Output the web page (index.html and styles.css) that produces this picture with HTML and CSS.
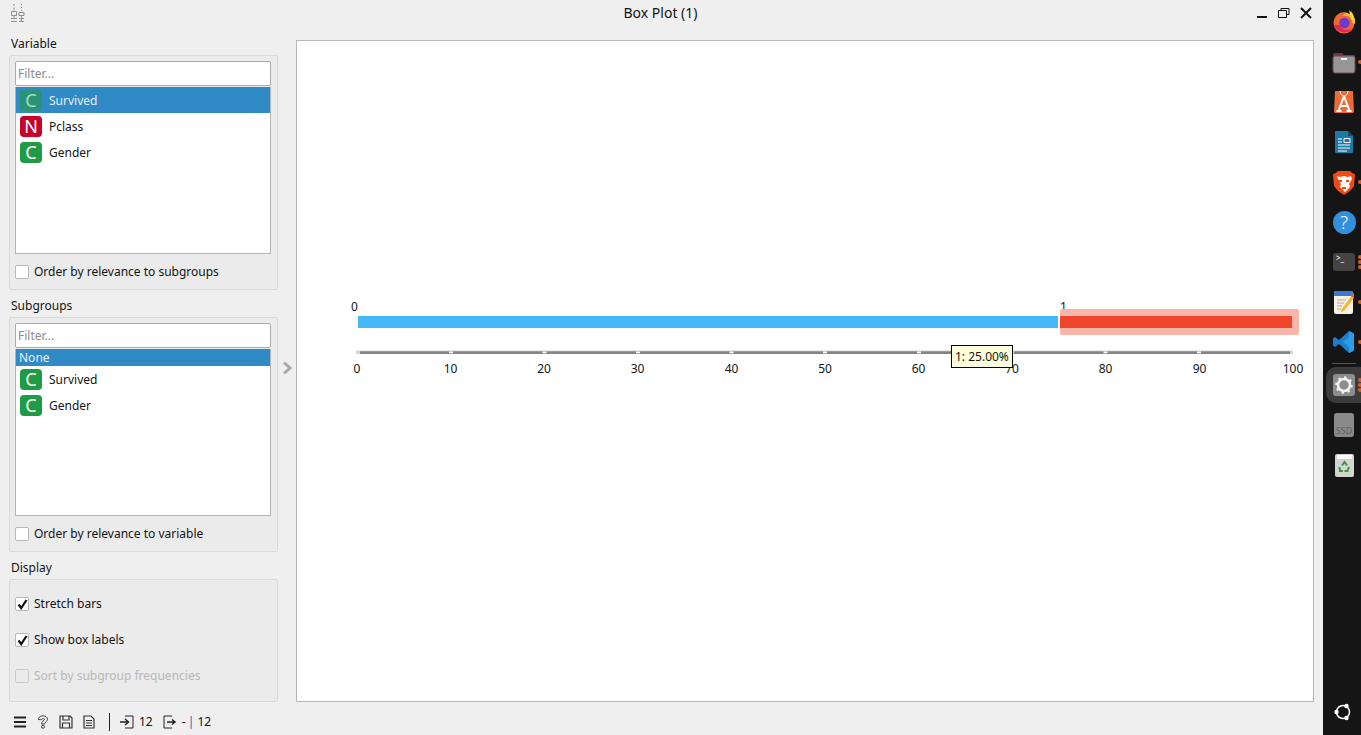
FILE: index.html
```html
<!DOCTYPE html>
<html lang="en">
<head>
<meta charset="utf-8">
<title>Box Plot (1)</title>
<link rel="stylesheet" href="styles.css">
</head>
<body>
<div class="window">
  <header class="titlebar">
    <svg class="app-icon" width="16" height="20" viewBox="0 0 16 20"><g fill="none" stroke="#8f8f8f"><path d="M4 1v2M4 4.500v3M1.500 8.500h5v4h-5zM4 13v2M1 15.500h6M1 18.500h6"/><path d="M11.500 1v1M11.500 4v1M11.500 7v1M9 9.500h5v3H9zM9 15.500h5M9 18.500h5M11.500 13v5"/></g></svg>
    <div class="title">Box Plot (1)</div>
    <div class="win-buttons">
      <svg width="12" height="12" viewBox="0 0 12 12"><path d="M1 10h10" stroke="#111" stroke-width="2"/></svg>
      <svg width="12" height="12" viewBox="0 0 12 12"><path d="M.5 3.500h8v7h-8zM3 3.500V1.500h8v6H8.500" fill="none" stroke="#111"/></svg>
      <svg width="12" height="12" viewBox="0 0 12 12"><path d="M1 1l10 10M11 1L1 11" fill="none" stroke="#111" stroke-width="2"/></svg>
    </div>
  </header>
  <div class="content">
    <aside class="sidebar">
      <section class="group">
        <h2 class="group-title">Variable</h2>
        <div class="group-box">
          <div class="filter">Filter...</div>
          <ul class="list">
            <li class="row selected"><span class="badge cont dim">C</span>Survived</li>
            <li class="row"><span class="badge nom">N</span>Pclass</li>
            <li class="row"><span class="badge cont">C</span>Gender</li>
          </ul>
          <label class="check order"><span class="box"></span>Order by relevance to subgroups</label>
        </div>
      </section>
      <section class="group">
        <h2 class="group-title">Subgroups</h2>
        <div class="group-box">
          <div class="filter">Filter...</div>
          <ul class="list">
            <li class="none">None</li>
            <li class="row"><span class="badge cont">C</span>Survived</li>
            <li class="row"><span class="badge cont">C</span>Gender</li>
          </ul>
          <label class="check order"><span class="box"></span>Order by relevance to variable</label>
        </div>
      </section>
      <section class="group">
        <h2 class="group-title">Display</h2>
        <div class="group-box display">
          <label class="check"><span class="box"><svg width="11" height="11" viewBox="0 0 11 11"><path d="M1.500 5.500l2.700 3.500L9.500 1" fill="none" stroke="#111" stroke-width="2.200"/></svg></span>Stretch bars</label>
          <label class="check"><span class="box"><svg width="11" height="11" viewBox="0 0 11 11"><path d="M1.500 5.500l2.700 3.500L9.500 1" fill="none" stroke="#111" stroke-width="2.200"/></svg></span>Show box labels</label>
          <label class="check disabled"><span class="box"></span>Sort by subgroup frequencies</label>
        </div>
      </section>
    </aside>
    <div class="splitter">
      <svg width="11" height="14" viewBox="0 0 11 14"><path d="M2 1.500L8 7l-6 5.500" fill="none" stroke="#a9a9a9" stroke-width="3"/></svg>
    </div>
    <main class="plot">
      <svg class="chart" width="1016" height="659" viewBox="0 0 1016 659">
        <g class="chart-text">
          <text x="57.500" y="270" text-anchor="middle">0</text>
          <text x="766.500" y="270" text-anchor="middle">1</text>
        </g>
        <rect x="61" y="275" width="700" height="12" fill="#45b8f8"/>
        <rect x="763" y="268" width="239" height="26" rx="2" fill="#fab5ab"/>
        <rect x="763" y="275" width="232" height="12" fill="#ef462c"/>
        <rect x="59" y="309.500" width="937" height="3.500" fill="#d4d4d4"/>
        <rect x="63" y="310.300" width="930" height="2.700" fill="#858585"/>
        <g fill="#fff">
          <rect x="152" y="310.500" width="4" height="1.800"/><rect x="245.500" y="310.500" width="4" height="1.800"/><rect x="339" y="310.500" width="4" height="1.800"/><rect x="432.500" y="310.500" width="4" height="1.800"/><rect x="526" y="310.500" width="4" height="1.800"/><rect x="620" y="310.500" width="4" height="1.800"/><rect x="713" y="310.500" width="4" height="1.800"/><rect x="806.500" y="310.500" width="4" height="1.800"/><rect x="900" y="310.500" width="4" height="1.800"/>
        </g>
        <g class="chart-text" text-anchor="middle">
          <text x="60" y="332">0</text><text x="153.500" y="332">10</text><text x="247" y="332">20</text><text x="340.500" y="332">30</text><text x="434.500" y="332">40</text><text x="528" y="332">50</text><text x="621.500" y="332">60</text><text x="715" y="332">70</text><text x="808.500" y="332">80</text><text x="902.500" y="332">90</text><text x="996" y="332">100</text>
        </g>
      </svg>
      <div class="tooltip">1: 25.00%</div>
    </main>
  </div>
  <footer class="statusbar">
    <svg width="14" height="14" viewBox="0 0 14 14"><path d="M1 2.500h12M1 7h12M1 11.500h12" stroke="#222" stroke-width="2"/></svg>
    <svg width="12" height="14" viewBox="0 0 12 14"><path d="M1.500 4.500C1.500 2.200 3.500.8 6 .8s4.500 1.400 4.500 3.500c0 2.200-2.700 2.700-3 4.700h-3c0-2.800 3-3.400 3-4.700 0-1-3-1-3 .5z" fill="none" stroke="#444"/><circle cx="6" cy="11.800" r="1.500" fill="none" stroke="#444"/></svg>
    <svg width="14" height="14" viewBox="0 0 14 14"><path d="M1 1h10l2 2v10H1zM4 1v4h6V1M3.500 13V8h7v5" fill="none" stroke="#333" stroke-width="1.200"/></svg>
    <svg width="12" height="14" viewBox="0 0 12 14"><path d="M1 1h7l3 3v9H1zM3 5.500h6M3 8h6M3 10.500h6" fill="none" stroke="#333" stroke-width="1.200"/></svg>
    <span class="divider"></span>
    <svg width="14" height="14" viewBox="0 0 14 14"><path d="M0 7h7M5 4l3.500 3L5 10" fill="none" stroke="#222" stroke-width="1.500"/><path d="M5 1h8v12H5" fill="none" stroke="#222"/></svg>
    <span class="count">12</span>
    <svg width="14" height="14" viewBox="0 0 14 14"><path d="M9 1H1v12h8" fill="none" stroke="#222"/><path d="M4 7h7M9 4.500L12 7l-3 2.500" fill="none" stroke="#222" stroke-width="1.500"/></svg>
    <span class="count">- <span class="bar">|</span> 12</span>
  </footer>
</div>
<nav class="dock">
  <div class="dock-item"><svg width="24" height="24" viewBox="0 0 24 24"><circle cx="12" cy="13" r="10.500" fill="#f4622d"/><path d="M2 11C4 4 10 2 14 3c-2 1-3 2-3 3 4-1 9 1 9 7l3 1c0-5-1-9-4-13 0 2-1 3-2 3-5-4-13-1-15 7z" fill="#fdb53c"/><path d="M17 0c3 3 6 7 6 13l-4-4z" fill="#ffd23f"/><circle cx="12.500" cy="13" r="5.200" fill="#6d3ad0"/><path d="M2 15c2 7 12 10 18 4-5 2-11 1-12-4z" fill="#e3245f"/></svg></div>
  <div class="dock-item dot"><svg width="24" height="24" viewBox="0 0 24 24"><path d="M1 5q0-2 2-2h7l2 2h10q1 0 1 2v3H1z" fill="#7a3044"/><rect x="1" y="6" width="22" height="17" rx="2" fill="#969696" stroke="#6e4a52"/><rect x="9" y="8" width="6" height="2" fill="#eee"/></svg></div>
  <div class="dock-item"><svg width="20" height="24" viewBox="0 0 20 24"><path d="M1 1h18l1 21-1 1H1l-1-1z" fill="#ec6a35"/><path d="M6 1c0 3 2 5 4 5s4-2 4-5" fill="none" stroke="#fff"/><path d="M10 6l-5.500 15M10 6l5.500 15M5.500 16h9M2.500 21h5M12.500 21h5" fill="none" stroke="#fff" stroke-width="2"/></svg></div>
  <div class="dock-item"><svg width="20" height="24" viewBox="0 0 20 24"><path d="M1 1h13l5 5v16q0 1-1 1H2q-1 0-1-1z" fill="#1d7aa6"/><path d="M14 1l5 5h-5z" fill="#0e4f70"/><path d="M4 9h4M4 12h4M10 8.500h6v4h-6zM4 15h12M4 18h12M4 21h9" stroke="#fff" fill="none"/></svg></div>
  <div class="dock-item dot"><svg width="22" height="25" viewBox="0 0 22 25"><path d="M5 1h12l2 2 3 1-1 12-4 5-6 4-6-4-4-5L0 4l3-1z" fill="#f14a15"/><path d="M4 6l3 1 4-1 4 1 3-1 1 3-3 5 1 3-5 5-5-5 1-3-3-5z" fill="#fff"/><path d="M6 11h3M13 11h3M9 18h4" stroke="#f14a15" stroke-width="2"/></svg></div>
  <div class="dock-item"><span class="help">?</span></div>
  <div class="dock-item dot triple"><span class="term">&gt;_</span></div>
  <div class="dock-item dot"><svg width="20" height="24" viewBox="0 0 20 24"><rect x="0" y="1" width="19" height="23" rx="2" fill="#f6f1e3"/><path d="M0 3q0-2 2-2h15q2 0 2 2v3H0z" fill="#3f78cf"/><path d="M3 10h9M3 13h7M3 16h5M3 19h4" stroke="#b9a98c"/><path d="M18 5L8 19l-1 3 3-1L20 8z" fill="#f6b52c"/><circle cx="19" cy="5" r="2" fill="#e8554e"/></svg></div>
  <div class="dock-item dot"><svg width="22" height="22" viewBox="0 0 22 22"><path d="M16 0l5 2.500v17L16 22 6 13l-4 3-2-1.500V7.500L2 6l4 3z" fill="#1a7fd0"/><path d="M16 0l5 2.500v17L16 22zM16 6l-6 5 6 5z" fill="#2a9ce8" fill-rule="evenodd"/></svg></div>
  <div class="dock-sep"></div>
  <div class="dock-active dot triple"><span class="gear-tile"><svg width="18" height="18" viewBox="0 0 18 18"><circle cx="9" cy="9" r="6" fill="none" stroke="#f2f2f2" stroke-width="2.500"/><circle cx="9" cy="9" r="7.800" fill="none" stroke="#f2f2f2" stroke-width="2" stroke-dasharray="2.400 3.700"/></svg></span></div>
  <div class="dock-item"><span class="ssd">SSD</span></div>
  <div class="dock-item"><svg width="19" height="23" viewBox="0 0 19 23"><rect width="19" height="23" rx="2" fill="#d3d6d0"/><rect x="2" y="1" width="15" height="4" rx="1" fill="#fdfdfd"/><path d="M7 11.500l2.500-3.500 2.500 3.500M14 13l-1.500 4h-3M8 17H5l-.5-4" fill="none" stroke="#3a9a3a" stroke-width="2"/></svg></div>
  <div class="dock-bottom"><svg width="18" height="18" viewBox="0 0 18 18"><circle cx="9" cy="9" r="6.500" fill="none" stroke="#fff" stroke-width="1.500"/><circle cx="2.500" cy="9" r="2.200" fill="#fff"/><circle cx="12.500" cy="3" r="2.200" fill="#fff"/><circle cx="12.500" cy="15" r="2.200" fill="#fff"/></svg></div>
</nav>
</body>
</html>
```

FILE: styles.css
```css
* { box-sizing: border-box; }
html, body { margin: 0; height: 100%; }
body {
  display: flex;
  width: 1361px;
  height: 735px;
  overflow: hidden;
  font: 12px/16px "Noto Sans", "Open Sans", sans-serif;
  color: #141414;
  background: #efefef;
}
.window { width: 1323px; display: flex; flex-direction: column; flex: none; }

.titlebar { height: 27px; position: relative; display: flex; align-items: center; justify-content: center; }
.app-icon { position: absolute; left: 10px; top: 3px; }
.title { font-size: 14px; margin: -2px 2px 0 0; }
.win-buttons { position: absolute; right: 11px; top: 7px; display: flex; gap: 10px; }

.content { height: 681px; display: flex; }
.sidebar { width: 269px; margin-left: 9px; padding-top: 8px; flex: none; }
.group-title { margin: 0; height: 20px; font-size: 12px; font-weight: 400; line-height: 16px; padding: 1px 0 0 2px; }
.group + .group { margin-top: 7px; }
.group-box {
  width: 269px;
  height: 235px;
  border: 1px solid #d9d9d9;
  border-radius: 2px;
  background: #ebebeb;
  padding: 5px;
}
.filter {
  height: 25px;
  border: 1px solid #ababab;
  border-radius: 2px;
  background: #fff;
  padding-left: 2px;
  line-height: 24px;
  color: #8c8c8c;
  width: 256px;
}
.list {
  list-style: none;
  margin: 0;
  padding: 0;
  width: 256px;
  height: 167px;
  background: #fff;
  border: 1px solid #b4b4b4;
  border-top: 0;
}
.row { height: 26px; display: flex; align-items: center; padding: 2px 0 0 4px; gap: 7px; }
.selected { background: #2f8ac6; color: #e6f0f7; margin-top: 1px; }
.none { height: 17px; padding-left: 3px; margin-top: 1px; background: #2f8ac6; color: #e6f0f7; line-height: 18px; }
.badge {
  width: 22px;
  height: 21px;
  margin-top: -2px;
  border-radius: 4px;
  color: #fff;
  font-size: 18px;
  line-height: 21px;
  text-align: center;
  flex: none;
}
.cont { background: #1f9a45; }
.nom { background: #c90028; }
.dim { background: #2b9276; color: #a8d8cd; }

.check { display: flex; align-items: center; gap: 5px; height: 16px; }
.order { margin-top: 10px; }
.box {
  width: 14px;
  height: 14px;
  border: 1px solid #b8b8b8;
  border-radius: 2px;
  background: #fff;
  display: flex;
  align-items: center;
  justify-content: center;
  flex: none;
}
.display { height: 123px; padding-top: 16px; display: flex; flex-direction: column; gap: 20px; }
.disabled { color: #b8b8b8; }
.disabled .box { background: #ebebeb; border-color: #c9c9c9; }

.splitter { width: 18px; flex: none; display: flex; align-items: center; justify-content: center; }
.plot {
  width: 1018px;
  height: 662px;
  margin-top: 13px;
  background: #fff;
  border: 1px solid #b7b7b7;
  position: relative;
  flex: none;
}
.chart { display: block; }
.chart-text text { font-size: 12px; fill: #141414; }
.tooltip {
  position: absolute;
  left: 654px;
  top: 304px;
  width: 62px;
  height: 23px;
  border: 1px solid #000;
  background: #ffffdc;
  padding-left: 3px;
  line-height: 21px;
  white-space: nowrap;
}

.statusbar { flex: 1; display: flex; align-items: center; padding-left: 13px; gap: 10px; padding-top: 1px; }
.divider { width: 1px; height: 18px; background: #222; margin-left: 4px; }
.count { margin-left: -5px; }
.bar { color: #1f66b5; margin-left: -1px; }

.dock { width: 38px; flex: none; background: #151515; padding-top: 2px; display: flex; flex-direction: column; overflow: hidden; }
.dock-item { height: 40px; display: flex; align-items: center; justify-content: center; position: relative; flex: none; padding-left: 4px; }
.dot::after {
  content: "";
  position: absolute;
  right: -1px;
  top: 18px;
  width: 4px;
  height: 4px;
  border-radius: 50%;
  background: #dc5a24;
}
.triple::after { box-shadow: 0 -5px #dc5a24, 0 5px #dc5a24; }
.help {
  width: 23px;
  height: 23px;
  border-radius: 50%;
  background: #3191de;
  color: #fff;
  text-align: center;
  font-size: 19px;
  font-weight: 300;
  line-height: 23px;
}
.term {
  width: 22px;
  height: 18px;
  border-radius: 3px;
  background: #444;
  color: #fff;
  font-size: 8px;
  line-height: 10px;
  padding-left: 3px;
}
.dock-sep { height: 1px; width: 24px; background: #555; margin: 1px 0 0 9px; flex: none; }
.dock-active {
  height: 36px;
  width: 35px;
  margin: 3px 0 2px 3px;
  border-radius: 10px 0 0 10px;
  background: #3c3c3c;
  display: flex;
  align-items: center;
  justify-content: center;
  position: relative;
  flex: none;
}
.dock-active.dot::after { top: 16px; }
.gear-tile {
  width: 22px;
  height: 22px;
  border-radius: 3px;
  background: #8d8d8d;
  display: flex;
  align-items: center;
  justify-content: center;
}
.ssd {
  width: 20px;
  height: 24px;
  border-radius: 3px;
  background: #8a8a8a;
  color: #5f5f5f;
  font-size: 9px;
  line-height: 11px;
  padding-top: 12px;
  text-align: center;
}
.dock-bottom { margin: auto 0 14px 11px; width: 18px; height: 18px; flex: none; }
.dock-bottom svg { display: block; }
```
